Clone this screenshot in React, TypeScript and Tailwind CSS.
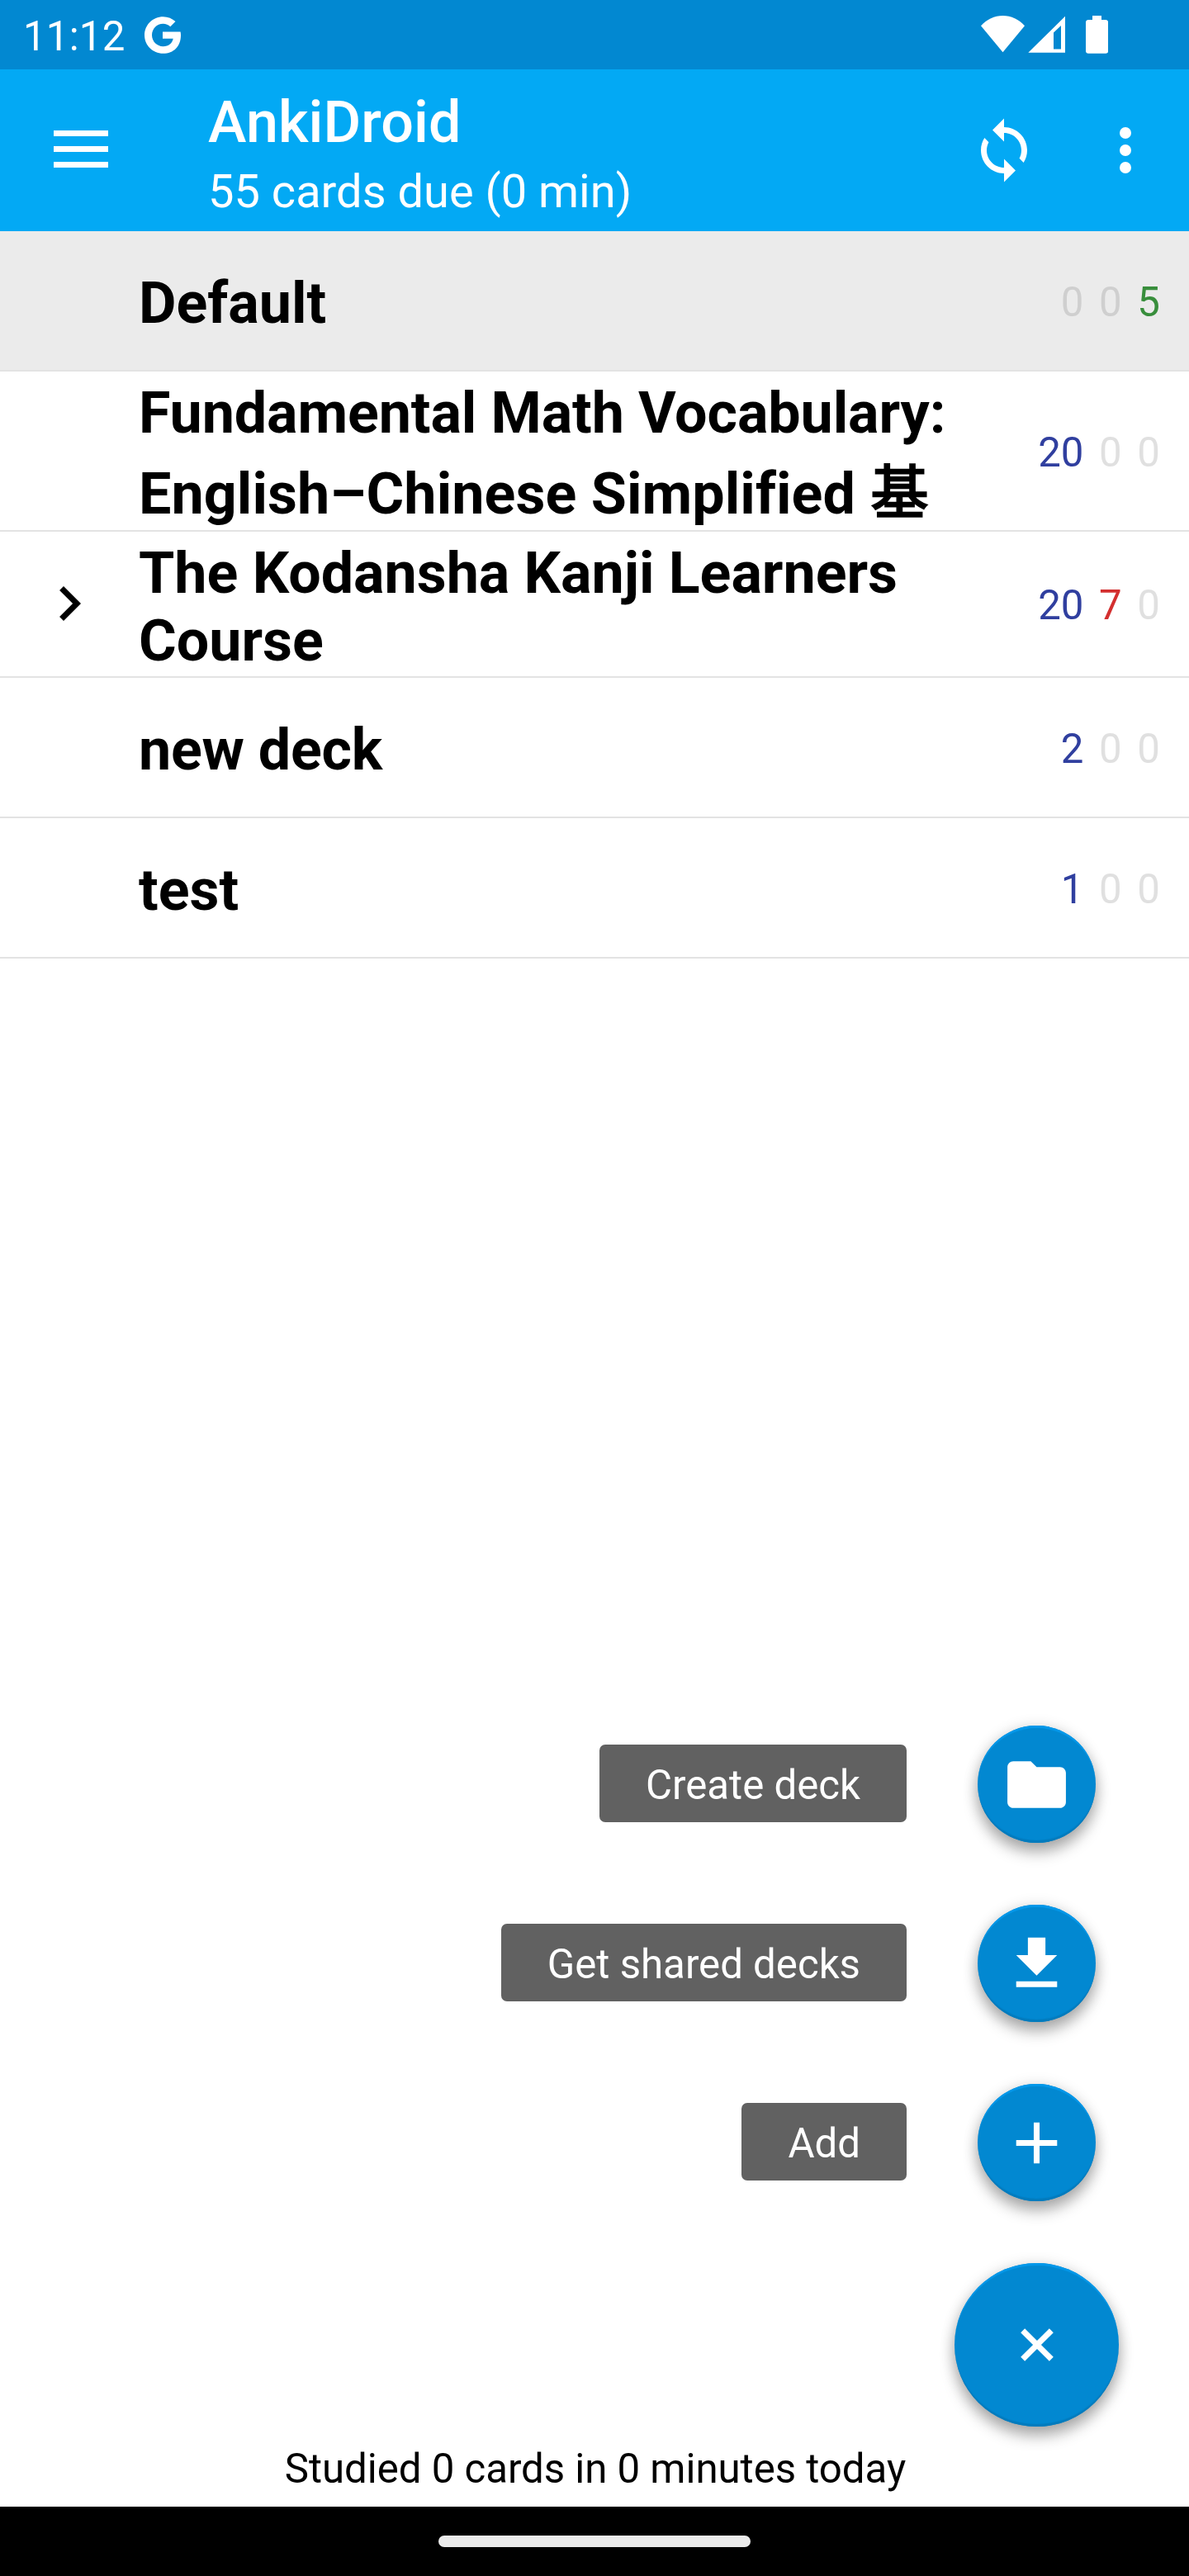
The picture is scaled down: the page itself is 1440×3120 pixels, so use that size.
import type { ReactNode } from "react";

const DP24 = "h-[84px] w-[84px] shrink-0";

type Count = { value: number; tone: string };

type Deck = {
  name: ReactNode;
  row: string;
  title: string;
  countsPad: string;
  counts: Count[];
  expandable?: boolean;
};

const NEW = "text-[#303f9f]";
const LEARN = "text-[#d32f2f]";
const REVIEW = "text-[#388e3c]";
const ZERO = "text-[#e0e0e0]";
const ZERO_SELECTED = "text-[#cfcfcf]";

const decks: Deck[] = [
  {
    name: "Default",
    row: "h-[170px] bg-[#ebebeb]",
    title: "pt-[46px] leading-[82px]",
    countsPad: "pt-[58px]",
    counts: [
      { value: 0, tone: ZERO_SELECTED },
      { value: 0, tone: ZERO_SELECTED },
      { value: 5, tone: REVIEW },
    ],
  },
  {
    name: (
      <>
        <span className="tracking-[-0.1px]">Fundamental Math Vocabulary:</span>
        <br />
        <span className="tracking-[0.07px]">English–Chinese Simplified </span>
        <span className="ml-px font-normal [-webkit-text-stroke:2.4px_black]">基</span>
      </>
    ),
    row: "h-[194px]",
    title: "pt-px leading-[98px]",
    countsPad: "pt-[70px]",
    counts: [
      { value: 20, tone: NEW },
      { value: 0, tone: ZERO },
      { value: 0, tone: ZERO },
    ],
  },
  {
    name: (
      <>
        The Kodansha Kanji Learners
        <br />
        Course
      </>
    ),
    row: "h-[177px]",
    title: "pt-[9px] leading-[82px] tracking-[-0.03px]",
    countsPad: "pt-[61px]",
    counts: [
      { value: 20, tone: NEW },
      { value: 7, tone: LEARN },
      { value: 0, tone: ZERO },
    ],
    expandable: true,
  },
  {
    name: "new deck",
    row: "h-[170px]",
    title: "pt-[46px] leading-[82px] tracking-[-0.25px]",
    countsPad: "pt-[58px]",
    counts: [
      { value: 2, tone: NEW },
      { value: 0, tone: ZERO },
      { value: 0, tone: ZERO },
    ],
  },
  {
    name: "test",
    row: "h-[170px]",
    title: "pt-[46px] leading-[82px]",
    countsPad: "pt-[58px]",
    counts: [
      { value: 1, tone: NEW },
      { value: 0, tone: ZERO },
      { value: 0, tone: ZERO },
    ],
  },
];

function StatusBar() {
  return (
    <div className="flex h-[84px] items-start bg-[#0288d1] pl-[28px] text-white">
      <span className="w-[146px] pt-[15px] text-[49.2px] leading-[58px] tracking-[0.2px]">11:12</span>
      <svg className="mt-[19.5px] h-[45px] w-[46px]" viewBox="0 0 46 45">
        <path
          fill="currentColor"
          d="M23 18.4h21.6c.3 1.4.4 2.9.4 4.5 0 12.8-8.600 21.900-21.500 21.900C11.100 44.800 1 34.900 1 22.500S11.100.200 23.500.200c6 0 11.100 2.200 15 5.800l-6.200 6.200c-2.300-2.200-5.400-3.400-8.800-3.400-7.500 0-13.500 6.200-13.500 13.700s6 13.700 13.500 13.700c6.900 0 11.200-3.900 12.200-9.400H23z"
        />
      </svg>
      <div className="ml-auto flex items-start pr-[98px]">
        <svg className="mt-[19px] h-[46px] w-[154px]" viewBox="0 0 154 46" fill="currentColor">
          <path d="M26.500 44.300 0 12.200C7 4.500 16.500 0 26.500 0S46 4.500 53 12.200z" />
          <path fillRule="evenodd" d="M57.300 44.700 102 .8V44.700zM97 12 88 20.500v20h9z" />
          <path d="M135 0h11v5h5c1.800 0 3.200 1.300 3.200 3v35c0 1.500-1.300 2.700-3 2.700h-21.200c-1.700 0-3-1.200-3-2.700V8c0-1.700 1.400-3 3.200-3h4.800z" />
        </svg>
      </div>
    </div>
  );
}

function AppBar() {
  return (
    <header className="flex h-[196px] items-center bg-[#03a9f4] text-white">
      <div className="ml-[65px] flex w-[66px] flex-col gap-[12px] pb-[3px]">
        <div className="h-[7px] bg-white" />
        <div className="h-[7px] bg-white" />
        <div className="h-[7px] bg-white" />
      </div>
      <div className="ml-[121px] flex h-full flex-col pt-[23px]">
        <h1 className="text-[70px] leading-[82px] font-medium tracking-[0.1px]">AnkiDroid</h1>
        <p className="mt-[10px] text-[56px] leading-[66px]">55 cards due (0 min)</p>
      </div>
      <svg className={`${DP24} ml-auto`} viewBox="0 0 24 24" fill="currentColor">
        <path d="M12 4V1L8 5l4 4V6c3.310 0 6 2.690 6 6 0 1.010-.25 1.970-.7 2.800l1.460 1.460C19.540 15.030 20 13.570 20 12c0-4.420-3.580-8-8-8zm0 14c-3.310 0-6-2.690-6-6 0-1.010.25-1.970.7-2.800L5.240 7.740C4.460 8.970 4 10.430 4 12c0 4.420 3.580 8 8 8v3l4-4-4-4v3z" />
      </svg>
      <svg className={`${DP24} mr-[35px] ml-[63px]`} viewBox="0 0 24 24" fill="currentColor">
        <circle cx="12" cy="6" r="2" />
        <circle cx="12" cy="12" r="2" />
        <circle cx="12" cy="18" r="2" />
      </svg>
    </header>
  );
}

function DeckRow({ deck }: { deck: Deck }) {
  return (
    <li className={`flex border-b-2 border-[#e3e3e3] ${deck.row}`}>
      <div className="flex w-[168px] shrink-0 items-center pb-px pl-[42px]">
        {deck.expandable && (
          <svg className={DP24} viewBox="0 0 24 24">
            <path d="M10 6 8.590 7.410 13.170 12l-4.580 4.590L10 18l6-6z" />
          </svg>
        )}
      </div>
      <div className={`grow text-[70px] font-bold whitespace-nowrap text-black ${deck.title}`}>
        {deck.name}
      </div>
      <div className={`flex gap-[18.6px] pr-[35px] text-[49.2px] leading-[57px] ${deck.countsPad}`}>
        {deck.counts.map((c, i) => (
          <span key={i} className={c.tone}>
            {c.value}
          </span>
        ))}
      </div>
    </li>
  );
}

const FAB =
  "flex shrink-0 items-center justify-center rounded-full bg-[#0288d1] text-white shadow-[inset_0_4px_1px_-1px_#0398ea,inset_0_-4px_1px_-1px_#027bbd,0_12px_18px_rgba(0,0,0,0.28),0_2px_18px_rgba(0,0,0,0.16)]";

function Action({ label, path }: { label: string; path: string }) {
  return (
    <div className="flex h-[142px] items-center justify-end pr-[113px]">
      <span className="mr-[86px] mb-[2px] h-[94px] rounded-[7px] bg-[#616161] px-[56px] pt-[21px] text-[49.2px] leading-[57px] text-white">
        {label}
      </span>
      <button className={`${FAB} h-[142px] w-[143px]`}>
        <svg className="h-[85px] w-[85px]" viewBox="0 0 24 24" fill="currentColor">
          <path d={path} />
        </svg>
      </button>
    </div>
  );
}

export default function App() {
  return (
    <div className="flex h-[3120px] w-[1440px] flex-col overflow-hidden bg-white font-[Roboto,'Noto_Sans_CJK_SC',sans-serif]">
      <StatusBar />
      <AppBar />
      <ul>
        {decks.map((d, i) => (
          <DeckRow key={i} deck={d} />
        ))}
      </ul>
      <div className="mt-auto flex flex-col gap-[75px]">
        <Action
          label="Create deck"
          path="M10 4H4c-1.100 0-1.990.9-1.990 2L2 18c0 1.100.9 2 2 2h16c1.100 0 2-.9 2-2V8c0-1.100-.9-2-2-2h-8l-2-2z"
        />
        <Action label="Get shared decks" path="M19 9h-4V3H9v6H5l7 7 7-7zM5 18v2h14v-2H5z" />
        <Action label="Add" path="M19 13h-6v6h-2v-6H5v-2h6V5h2v6h6v2z" />
        <div className="flex justify-end pr-[85px]">
          <button className={`${FAB} h-[198px] w-[199px]`}>
            <svg className="h-[84px] w-[84px] rotate-45" viewBox="0 0 24 24" fill="currentColor">
              <path d="M19 13h-6v6h-2v-6H5v-2h6V5h2v6h6v2z" />
            </svg>
          </button>
        </div>
      </div>
      <p className="h-[97px] pt-[23px] pl-[2px] text-center text-[49.2px] leading-[57px] tracking-[-0.03px] text-black">
        Studied 0 cards in 0 minutes today
      </p>
      <div className="flex h-[84px] justify-center bg-black pt-[35px]">
        <div className="h-[14px] w-[378px] rounded-full bg-[#ebebeb]" />
      </div>
    </div>
  );
}
